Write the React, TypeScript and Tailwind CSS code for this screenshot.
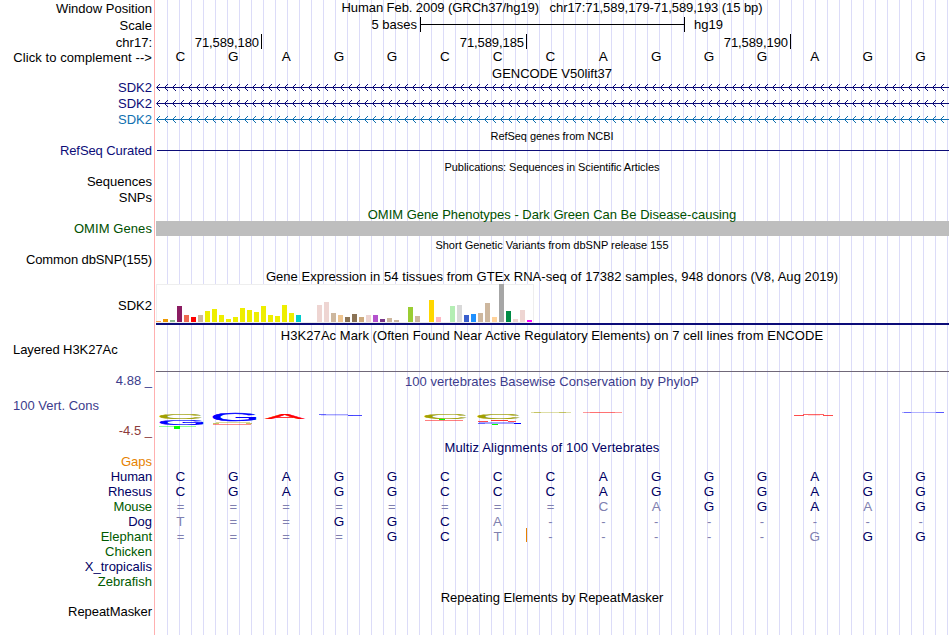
import clsx from "clsx";

interface Label {
  text: string;
  // gap above the label
  gap?: string;
  color?: string;
  align?: string;
  tracking?: string;
}

const labels: Label[] = [
  { text: "Window Position", gap: "mt-px" },
  { text: "Scale", gap: "mt-0.5" },
  { text: "chr17:", gap: "mt-0.5" },
  { text: "Click to complement -->", tracking: "tracking-[0.08px]" },
  { text: "SDK2", gap: "mt-[15px]", color: "text-[#0c0c78]" },
  { text: "SDK2", gap: "mt-px", color: "text-[#0c0c78]" },
  { text: "SDK2", gap: "mt-px", color: "text-[#1070b0]" },
  { text: "RefSeq Curated", gap: "mt-4", color: "text-[#0c0c78]", tracking: "tracking-[-0.08px]" },
  { text: "Sequences", gap: "mt-4" },
  { text: "SNPs", gap: "mt-px" },
  { text: "OMIM Genes", gap: "mt-4", color: "text-[#005000]", tracking: "tracking-[0.08px]" },
  { text: "Common dbSNP(155)", gap: "mt-4", tracking: "tracking-[-0.11px]" },
  { text: "SDK2", gap: "mt-[31px]" },
  { text: "Layered H3K27Ac", gap: "mt-[29px]", align: "self-start pl-[13px]", tracking: "tracking-[-0.06px]" },
  { text: "4.88 _", gap: "mt-4", color: "text-[#3c3c8c]" },
  { text: "100 Vert. Cons", gap: "mt-2.5", color: "text-[#3c3c8c]", align: "self-start pl-[13px]" },
  { text: "-4.5 _", gap: "mt-2.5", color: "text-[#8c3c3c]" },
  { text: "Gaps", gap: "mt-4", color: "text-[#e68200]" },
  { text: "Human", color: "text-[#000064]", tracking: "tracking-[-0.15px]" },
  { text: "Rhesus", color: "text-[#000064]" },
  { text: "Mouse", color: "text-[#005a00]", tracking: "tracking-[-0.1px]" },
  { text: "Dog", color: "text-[#000064]" },
  { text: "Elephant", color: "text-[#005a00]" },
  { text: "Chicken", color: "text-[#005a00]" },
  { text: "X_tropicalis", color: "text-[#000064]" },
  { text: "Zebrafish", color: "text-[#005a00]" },
  { text: "RepeatMasker", gap: "mt-[15px]", tracking: "tracking-[-0.05px]" },
];

const reference = "CGAGGCCCAGGGAGG";

const alignments = [
  { species: "Human", bases: "CGAGGCCCAGGGAGG" },
  { species: "Rhesus", bases: "CGAGGCCCAGGGAGG" },
  { species: "Mouse", bases: "========CAGGAAG" },
  { species: "Dog", bases: "T==GGCA--------" },
  { species: "Elephant", bases: "====GCT-----GGG" },
];

// [height, color] for each of the 54 tissues
const tissues: [number, string][] = [
  [1, "#ffa54f"], [3, "#ee9a00"], [2, "#8fbc8f"], [16, "#8b1c62"], [7, "#ee6a50"], [5, "#ff0000"],
  [7, "#cdb79e"], [11, "#eeee00"], [13, "#eeee00"], [7, "#eeee00"], [3, "#eeee00"], [5, "#eeee00"],
  [14, "#eeee00"], [12, "#eeee00"], [10, "#eeee00"], [16, "#eeee00"], [7, "#eeee00"], [6, "#eeee00"],
  [17, "#eeee00"], [9, "#eeee00"], [7, "#00cdcd"], [0, "#9ac0cd"], [0, "#ee82ee"], [17, "#eed5d2"],
  [20, "#eed5d2"], [9, "#cdb79e"], [7, "#eec591"], [5, "#8b7355"], [8, "#8b7355"], [5, "#cdaa7d"],
  [7, "#eed5d2"], [7, "#b452cd"], [3, "#7a378b"], [4, "#cdb79e"], [2, "#cdb79e"], [0, "#cdb79e"],
  [15, "#9acd32"], [6, "#cdb79e"], [0, "#7a67ee"], [22, "#ffd700"], [5, "#ffb6c1"], [0, "#cd9b1d"],
  [16, "#b4eeb4"], [17, "#d9d9d9"], [7, "#3a5fcd"], [8, "#1e90ff"], [9, "#cdb79e"], [19, "#cdb79e"],
  [5, "#ffd39b"], [38, "#a6a6a6"], [11, "#008b45"], [3, "#eed5d2"], [12, "#eed5d2"], [2, "#ff00ff"],
];

// Ink box of each letter, in hundredths of an em
const ink: Record<string, { left: number; width: number }> = {
  A: { left: 0.2, width: 66.3 },
  C: { left: 5, width: 63.3 },
  G: { left: 5, width: 67.5 },
};

const baseColor: Record<string, string> = {
  A: "#ff0000",
  C: "#a0a000",
  G: "#0000ff",
};

// letter, x, top, width, height
const logo: [string, number, number, number, number][] = [
  ["C", 4.5, 24.8, 40.5, 5.4],
  ["G", 4.5, 30.8, 43, 5.6],
  ["G", 57.5, 24.8, 43, 7.6],
  ["A", 109.5, 24.6, 38.5, 5.6],
  ["C", 269.5, 24.8, 40.5, 4.8],
  ["C", 322.5, 24.8, 40.5, 5.4],
];

// Letters too flat to read: x, y, width, height, color, opacity
const slivers: [number, number, number, number, string, number][] = [
  [3, 37, 37, 1, "#00ff00", 0.4],
  [18, 37, 6, 3, "#00ff00", 1],
  [60, 33, 34, 1, "#a0a000", 0.4],
  [57, 34, 6, 1, "#a0a000", 0.6],
  [90, 34, 6, 1, "#a0a000", 0.6],
  [57, 35, 38, 1, "#ff0000", 0.45],
  [163, 25, 7, 1, "#0000ff", 0.6],
  [165, 26, 32, 1, "#0000ff", 0.15],
  [170, 25, 22, 1, "#0000ff", 0.35],
  [192, 26, 14, 1, "#0000ff", 0.7],
  [283, 30, 6, 1, "#00ff00", 1],
  [269, 31, 38, 1, "#ff0000", 0.5],
  [335, 31, 17, 1, "#ff0000", 0.8],
  [322, 32, 10, 1, "#ff0000", 0.7],
  [352, 32, 8, 1, "#ff0000", 0.7],
  [323, 33, 35, 1, "#0000ff", 0.35],
  [322, 34, 7, 1, "#0000ff", 0.6],
  [329, 34, 30, 1, "#0000ff", 0.35],
  [358, 34, 7, 1, "#0000ff", 1],
  [336, 35, 6, 1, "#00ff00", 1],
  [375, 23, 40, 1, "#a0a000", 0.35],
  [378, 23, 7, 1, "#a0a000", 0.4],
  [403, 23, 7, 1, "#a0a000", 0.4],
  [427, 23, 39, 1, "#ff0000", 0.4],
  [434, 23, 25, 1, "#ff0000", 0.25],
  [638, 26, 10, 1, "#ff0000", 0.7],
  [647, 25, 21, 1, "#ff0000", 0.6],
  [652, 26, 12, 1, "#ff0000", 0.15],
  [667, 26, 10, 1, "#ff0000", 0.7],
  [746, 23, 42, 1, "#0000ff", 0.3],
  [748, 23, 7, 1, "#0000ff", 0.4],
  [780, 23, 8, 1, "#0000ff", 0.5],
];

function Title({ children, className }: { children: React.ReactNode; className?: string }) {
  return <div className={clsx("h-[15px] pr-px text-center whitespace-pre", className)}>{children}</div>;
}

function SmallTitle({ children, className }: { children: React.ReactNode; className?: string }) {
  return <div className={clsx("h-3 pr-px text-center text-[11px] leading-3", className)}>{children}</div>;
}

function BaseRow({ bases, human }: { bases: string; human?: string }) {
  return (
    <div className="grid h-[15px] grid-cols-[repeat(15,minmax(0,1fr))]">
      {bases.split("").map((base, i) => (
        <span
          key={i}
          className={clsx(
            "pr-1 text-center",
            base !== "=" && base !== "-" && "text-[13.5px]",
            human && (base === human[i] ? "text-[#000064]" : "text-[#8080b0]")
          )}
        >
          {base}
        </span>
      ))}
    </div>
  );
}

function GeneLine({ color }: { color: string }) {
  const tips = Array.from({ length: 99 }, (_, i) => i * 8 + 0.5);
  return (
    <svg width="793" height="16" className={clsx("block", color)}>
      <line x1="1" y1="7.5" x2="793" y2="7.5" stroke="currentColor" shapeRendering="crispEdges" />
      {tips.map((x) => (
        <polyline key={x} points={`${x + 3.5},4 ${x},7.5 ${x + 3.5},11`} fill="none" stroke="currentColor" />
      ))}
    </svg>
  );
}

function ExpressionGraph() {
  return (
    <div className="flex h-[39px] w-[378px] items-end gap-0.5 border border-[#eeeeee] bg-white">
      {tissues.map(([height, color], i) => (
        <div key={i} className="-ml-px mr-px w-[5px] shrink-0" style={{ height, backgroundColor: color }} />
      ))}
    </div>
  );
}

function ConservationLogo() {
  return (
    <svg width="793" height="51" className="block">
      {slivers.map(([x, y, width, height, color, opacity], i) => (
        <rect key={i} x={x} y={y} width={width} height={height} fill={color} opacity={opacity} />
      ))}
      {logo.map(([letter, x, top, width, height], i) => {
        const sx = width / ink[letter].width;
        const sy = height / 70;
        return (
          <text
            key={i}
            fontSize="100"
            fill={baseColor[letter]}
            stroke={baseColor[letter]}
            strokeWidth="3"
            transform={`translate(${x - ink[letter].left * sx} ${top + height}) scale(${sx} ${sy})`}
          >
            {letter}
          </text>
        );
      })}
    </svg>
  );
}

export default function App() {
  return (
    <div className="flex h-[635px] w-[950px] overflow-hidden bg-white font-['Liberation_Sans',Arial,sans-serif] text-[13px] leading-[15px] text-black">
      <div className="flex w-[155px] shrink-0 flex-col items-end border-r border-[#ffb0b0]">
        {labels.map((label, i) => (
          <div
            key={i}
            className={clsx(
              "h-[15px] shrink-0 whitespace-nowrap",
              label.align ?? "pr-0.5",
              label.gap,
              label.color,
              label.tracking
            )}
          >
            {label.text}
          </div>
        ))}
      </div>

      <div className="ml-px w-[793px] shrink-0 bg-[repeating-linear-gradient(to_right,transparent_0px,transparent_11px,#dcdcf8_11px,#dcdcf8_12px)]">
        <Title className="tracking-[-0.07px]">Human Feb. 2009 (GRCh37/hg19)   chr17:71,589,179-71,589,193 (15 bp)</Title>

        {/* Scale bar */}
        <div className="mt-0.5 flex h-[15px]">
          <span className="w-[264px] pr-[3px] text-right">5 bases</span>
          <div className="flex w-[265px] items-center border-x border-black">
            <div className="h-px w-full bg-black" />
          </div>
          <span className="pl-[9px]">hg19</span>
        </div>

        {/* Coordinates */}
        <div className="mt-0.5 flex h-[15px] text-right leading-[17px] tracking-[-0.08px]">
          <span className="w-[106px] border-r border-black pr-0.5">71,589,180</span>
          <span className="w-[265px] border-r border-black pr-0.5">71,589,185</span>
          <span className="w-[264px] border-r border-black pr-0.5">71,589,190</span>
        </div>
        <BaseRow bases={reference} />

        <Title className="mt-0.5 mb-[-1px]">GENCODE V50lift37</Title>
        <GeneLine color="text-[#0c0c78]" />
        <GeneLine color="text-[#0c0c78]" />
        <GeneLine color="text-[#1070b0]" />

        <SmallTitle className="mt-0.5 tracking-[-0.05px]">RefSeq genes from NCBI</SmallTitle>
        <div className="mt-2 ml-px h-px bg-[#0c0c78]" />

        <SmallTitle className="mt-2.5 tracking-[-0.06px]">Publications: Sequences in Scientific Articles</SmallTitle>

        <Title className="mt-[34px] text-[#005000]">OMIM Gene Phenotypes - Dark Green Can Be Disease-causing</Title>
        <div className="-mt-px h-[15px] bg-[#bebebe]" />

        <SmallTitle className="mt-[3px]">Short Genetic Variants from dbSNP release 155</SmallTitle>

        <Title className="mt-[18px] tracking-[0.055px]">
          Gene Expression in 54 tissues from GTEx RNA-seq of 17382 samples, 948 donors (V8, Aug 2019)
        </Title>
        <ExpressionGraph />
        <div className="h-0.5 bg-[#0c0c78]" />

        <Title className="mt-[3px] tracking-[0.055px]">
          H3K27Ac Mark (Often Found Near Active Regulatory Elements) on 7 cell lines from ENCODE
        </Title>
        <div className="mt-7 h-px bg-[#706878]" />

        <Title className="mt-0.5 tracking-[0.04px] text-[#3c3c8c]">100 vertebrates Basewise Conservation by PhyloP</Title>
        <ConservationLogo />

        <Title className="mb-3.5 tracking-[0.11px] text-[#000064]">Multiz Alignments of 100 Vertebrates</Title>
        <div className="relative">
          {alignments.map((row) => (
            <BaseRow key={row.species} bases={row.bases} human={reference} />
          ))}
          {/* Insertion marker in the elephant row */}
          <div className="absolute bottom-0.5 left-[370px] h-3.5 w-px bg-[#e68200]" />
        </div>

        <Title className="mt-[46px]">Repeating Elements by RepeatMasker</Title>
      </div>
    </div>
  );
}
